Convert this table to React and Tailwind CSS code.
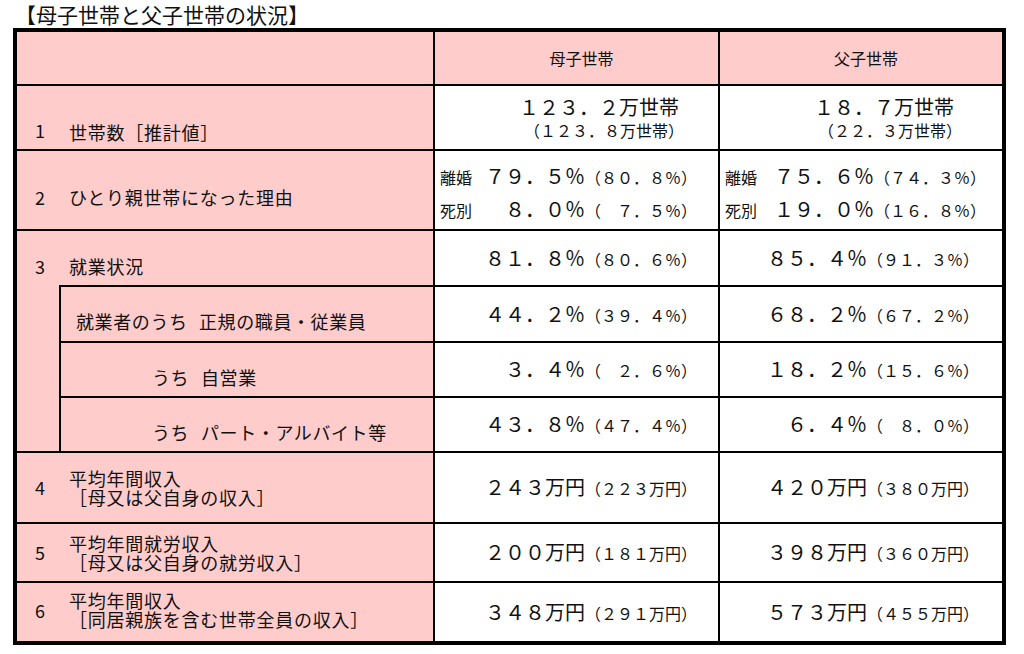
import React from "react";

const Val = ({ main, sub, pr }) => (
  <div className={`flex h-full items-center justify-end ${pr}`}>
    <div className="flex items-baseline">
      <span className="text-[20px] leading-[24px]">{main}</span>
      <span className="text-[16px] leading-[24px]">{sub}</span>
    </div>
  </div>
);

const Reason = ({ rows, pr }) => (
  <div className={`flex h-full flex-col justify-center gap-[8px] pl-[5px] pt-[6px] ${pr}`}>
    {rows.map((r) => (
      <div key={r[0]} className="flex items-baseline justify-between">
        <span className="text-[16px] leading-[24px]">{r[0]}</span>
        <span>
          <span className="text-[20px] leading-[24px]">{r[1]}</span>
          <span className="text-[16px] leading-[24px]">{r[2]}</span>
        </span>
      </div>
    ))}
  </div>
);

const Label = ({ n, children, extra = "" }) => (
  <div className={`flex h-full items-center pl-[18px] text-[18px] tracking-[0.75px] ${extra}`}>
    <span className="w-[34px] shrink-0">{n}</span>
    <div className="leading-[19px]">{children}</div>
  </div>
);

const Row = ({ h, label, a, b }) => (
  <div className={`flex border-b-2 border-black ${h}`}>
    <div className="w-[416px] bg-[#ffcccc]">{label}</div>
    <div className="w-[285px] border-l-2 border-black">{a}</div>
    <div className="w-[284px] border-l-2 border-black">{b}</div>
  </div>
);

const Sub = ({ h, first, rest, pl, w, pt, border = true }) => (
  <div className={`flex items-center text-[18px] tracking-[0.6px] ${h} ${pl} ${pt} ${border ? "border-b-2 border-black" : ""}`}>
    <span className={`shrink-0 ${w}`}>{first}</span>
    <span>{rest}</span>
  </div>
);

export default function App() {
  return (
    <div className="h-[654px] w-[1024px] bg-white text-[#111] font-['Noto_Sans_CJK_JP','Noto_Sans',sans-serif]">
      <div className="h-[28px] pl-[15px] text-[21px] font-normal leading-[28px] text-[#111]">
        【母子世帯と父子世帯の状況】
      </div>

      <div className="ml-[13px] w-[993px] border-4 border-black">
        {/* header */}
        <div className="flex h-[54px] border-b-2 border-black bg-[#ffcccc] text-[16px]">
          <div className="w-[416px]" />
          <div className="flex w-[285px] items-center justify-center border-l-2 border-black pl-[10px]">母子世帯</div>
          <div className="flex w-[284px] items-center justify-center border-l-2 border-black pl-[10px]">父子世帯</div>
        </div>

        <Row
          h="h-[65px]"
          label={
            <Label n="1" extra="items-end pb-[5px]">
              <span className="leading-[24px]">世帯数［推計値］</span>
            </Label>
          }
          a={
            <div className="flex h-full flex-col items-end justify-center pr-[39px]">
              <span className="text-[20px] leading-[24px]">１２３．２万世帯</span>
              <span className="mr-[-5px] text-[16px] leading-[22px]">（１２３．８万世帯）</span>
            </div>
          }
          b={
            <div className="flex h-full flex-col items-end justify-center pr-[48px]">
              <span className="text-[20px] leading-[24px]">１８．７万世帯</span>
              <span className="mr-[-8px] text-[16px] leading-[22px]">（２２．３万世帯）</span>
            </div>
          }
        />

        <Row
          h="h-[80px]"
          label={
            <Label n="2" extra="pt-[14px]">
              ひとり親世帯になった理由
            </Label>
          }
          a={
            <Reason
              pr="pr-[21px]"
              rows={[
                ["離婚", "７９．５％", "（８０．８％）"],
                ["死別", "８．０％", "（　７．５％）"],
              ]}
            />
          }
          b={
            <Reason
              pr="pr-[16px]"
              rows={[
                ["離婚", "７５．６％", "（７４．３％）"],
                ["死別", "１９．０％", "（１６．８％）"],
              ]}
            />
          }
        />

        {/* 3 就業状況 */}
        <div className="flex h-[222px] border-b-2 border-black">
          <div className="flex w-[416px] flex-col bg-[#ffcccc]">
            <div className="h-[54px]">
              <Label n="3" extra="pt-[16px]">
                就業状況
              </Label>
            </div>
            <div className="flex flex-1 pl-[42px]">
              <div className="flex flex-1 flex-col border-l-2 border-t-2 border-black">
                <Sub h="h-[56px]" pl="pl-[15px]" pt="pt-[14px]" w="w-[123px]" first="就業者のうち" rest="正規の職員・従業員" />
                <Sub h="h-[55px]" pl="pl-[91px]" pt="pt-[16px]" w="w-[49px]" first="うち" rest="自営業" />
                <Sub h="flex-1" pl="pl-[91px]" pt="pt-[15px]" w="w-[49px]" first="うち" rest="パート・アルバイト等" border={false} />
              </div>
            </div>
          </div>
          <div className="flex w-[285px] flex-col border-l-2 border-black">
            <div className="h-[56px] border-b-2 border-black"><Val pr="pr-[21px]" main="８１．８％" sub="（８０．６％）" /></div>
            <div className="h-[56px] border-b-2 border-black"><Val pr="pr-[21px]" main="４４．２％" sub="（３９．４％）" /></div>
            <div className="h-[55px] border-b-2 border-black"><Val pr="pr-[21px]" main="３．４％" sub="（　２．６％）" /></div>
            <div className="flex-1"><Val pr="pr-[21px]" main="４３．８％" sub="（４７．４％）" /></div>
          </div>
          <div className="flex w-[284px] flex-col border-l-2 border-black">
            <div className="h-[56px] border-b-2 border-black"><Val pr="pr-[23px]" main="８５．４％" sub="（９１．３％）" /></div>
            <div className="h-[56px] border-b-2 border-black"><Val pr="pr-[23px]" main="６８．２％" sub="（６７．２％）" /></div>
            <div className="h-[55px] border-b-2 border-black"><Val pr="pr-[23px]" main="１８．２％" sub="（１５．６％）" /></div>
            <div className="flex-1"><Val pr="pr-[23px]" main="６．４％" sub="（　８．０％）" /></div>
          </div>
        </div>

        <Row
          h="h-[71px]"
          label={
            <Label n="4">
              平均年間収入
              <br />
              ［母又は父自身の収入］
            </Label>
          }
          a={<Val pr="pr-[21px]" main="２４３万円" sub="（２２３万円）" />}
          b={<Val pr="pr-[23px]" main="４２０万円" sub="（３８０万円）" />}
        />
        <Row
          h="h-[59px]"
          label={
            <Label n="5">
              平均年間就労収入
              <br />
              ［母又は父自身の就労収入］
            </Label>
          }
          a={<Val pr="pr-[21px]" main="２００万円" sub="（１８１万円）" />}
          b={<Val pr="pr-[23px]" main="３９８万円" sub="（３６０万円）" />}
        />
        <div className="flex h-[58px]">
          <div className="w-[416px] bg-[#ffcccc]">
            <Label n="6" extra="pb-[4px]">
              平均年間収入
              <br />
              ［同居親族を含む世帯全員の収入］
            </Label>
          </div>
          <div className="w-[285px] border-l-2 border-black">
            <Val pr="pr-[21px]" main="３４８万円" sub="（２９１万円）" />
          </div>
          <div className="w-[284px] border-l-2 border-black">
            <Val pr="pr-[23px]" main="５７３万円" sub="（４５５万円）" />
          </div>
        </div>
      </div>
    </div>
  );
}
